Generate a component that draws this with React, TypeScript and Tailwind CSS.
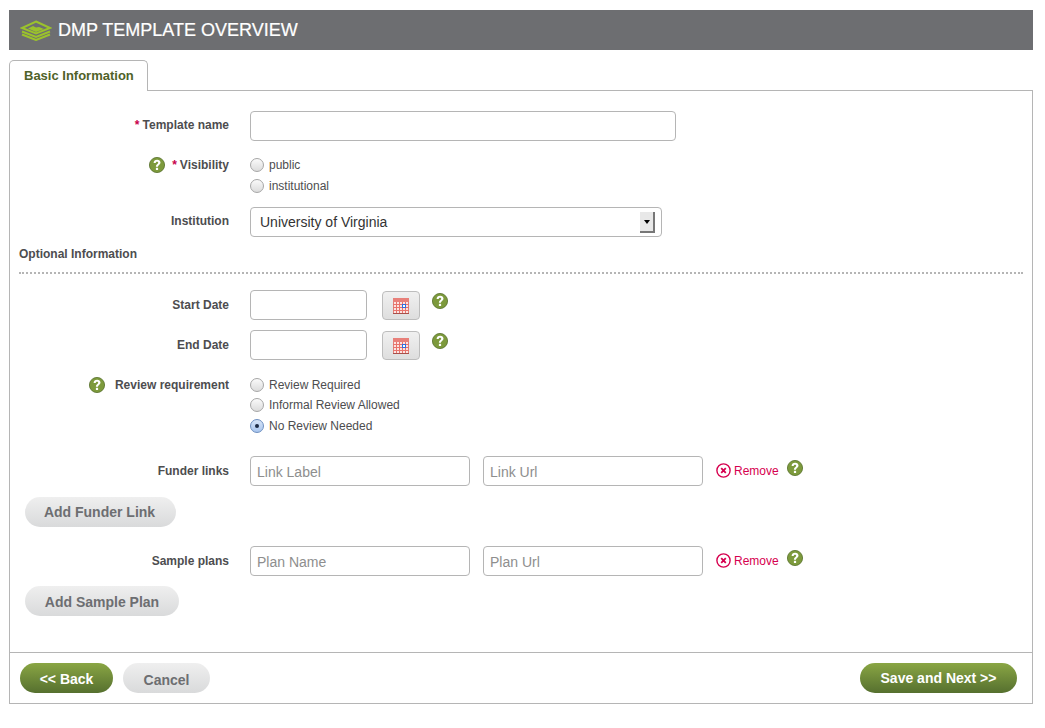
import React, { FC, ReactNode } from 'react';

const greenBtn =
  'h-[30px] rounded-[15px] bg-gradient-to-b from-[#8aa644] to-[#56702f] text-[14px] font-bold text-white flex items-center justify-center';
const greyBtn =
  'h-[30px] rounded-[15px] bg-gradient-to-b from-[#efefef] to-[#d9dadb] text-[14px] font-bold text-[#6d6e71] flex items-center justify-center';
const textInput =
  'h-[30px] rounded-[4px] border border-[#b5b5b5] bg-white px-[6px] text-[14px] text-[#333] placeholder:text-[#8e8e8e] outline-none';

const HelpIcon: FC<{ className?: string }> = ({ className }) => (
  <svg width="16" height="16" viewBox="0 0 16 16" className={`shrink-0 ${className ?? ''}`}>
    <circle cx="8" cy="8" r="7.6" fill="#7d9a3c" stroke="#55702a" strokeWidth="0.8" />
    <path
      d="M4.6 5.9C4.7 3.9 6.1 2.8 8.1 2.8c2 0 3.4 1.1 3.4 2.8 0 1.3-.8 2-1.6 2.6-.7.5-.9.8-.9 1.6H6.9c0-1.4.4-2 1.2-2.6.7-.5 1.1-.9 1.1-1.4 0-.6-.5-1-1.2-1-.8 0-1.2.4-1.3 1.1z"
      fill="#fff"
    />
    <rect x="6.9" y="10.8" width="2.2" height="2.2" fill="#fff" />
  </svg>
);

const LayersIcon = () => (
  <svg width="32" height="21" viewBox="0 0 32 21" fill="none" stroke="#9bc22c" strokeWidth="2">
    <path d="M16 1.5 30 8 16 13.5 2 8z" />
    <path d="M2 11.5 16 17 30 11.5" />
    <path d="M2 14.5 16 20 30 14.5" />
    <path d="M8 8.5l5-2.5 3 1.5 3-.5 5 2-8 3z" fill="#9bc22c" stroke="none" />
  </svg>
);

const CalendarIcon = () => (
  <svg width="16" height="16" viewBox="0 0 16 16">
    <rect x="0.5" y="0.5" width="15" height="15" fill="#fbe4e2" stroke="#e0807a" />
    <rect x="0" y="0" width="16" height="4" fill="#e8807a" />
    <path
      d="M0 6.5h16M0 9.5h16M0 12.5h16M3.5 4v12M6.5 4v12M9.5 4v12M12.5 4v12"
      stroke="#e8736c"
      strokeWidth="1"
    />
    <rect x="9.5" y="6.5" width="3" height="3" fill="#fff" stroke="#2f6fe0" />
    <rect x="0" y="15" width="16" height="1" fill="#a9504a" />
  </svg>
);

const RemoveIcon = () => (
  <svg width="15" height="15" viewBox="0 0 15 15" fill="none" stroke="#d6004f" className="shrink-0">
    <circle cx="7.5" cy="7.5" r="6.6" strokeWidth="1.4" />
    <path d="M5.2 5.2l4.6 4.6M9.8 5.2l-4.6 4.6" strokeWidth="1.8" />
  </svg>
);

const Radio: FC<{ label: string; checked?: boolean; className?: string }> = ({ label, checked, className }) => (
  <div className={`flex items-center gap-[5px] h-[14px] text-[12px] text-[#4d4d4f] ${className ?? ''}`}>
    <span
      className={`w-[14px] h-[14px] rounded-full border flex items-center justify-center shrink-0 ${
        checked
          ? 'border-[#6d8fc0] bg-gradient-to-b from-[#d6e4f7] to-[#a9c6ee]'
          : 'border-[#a6a6a6] bg-gradient-to-b from-[#fafafa] to-[#dcdcdc]'
      }`}
    >
      {checked && <span className="w-[4px] h-[4px] rounded-full bg-[#1c2a44]" />}
    </span>
    {label}
  </div>
);

const Field: FC<{ label: ReactNode; className?: string; tight?: boolean; children: ReactNode }> = ({
  label,
  className,
  tight,
  children,
}) => (
  <div className={`flex ${className ?? ''}`}>
    <div
      className={`w-[219px] mr-[21px] shrink-0 flex justify-end items-center gap-[7px] h-[14px] text-[12px] font-bold text-[#4d4d4f] ${
        tight ? 'mt-[7px]' : 'mt-[8px]'
      }`}
    >
      {label}
    </div>
    {children}
  </div>
);

const Req = () => <span className="text-[#c8004b] mr-[3px]">*</span>;

const DateField: FC<{ label: string; className?: string }> = ({ label, className }) => (
  <Field label={label} className={className}>
    <input className={`${textInput} w-[117px]`} />
    <div className="ml-[15px] mt-px w-[38px] h-[29px] rounded-[4px] border border-[#bdbdbd] bg-gradient-to-b from-[#f0f0f0] to-[#dedede] flex items-center justify-center">
      <CalendarIcon />
    </div>
    <HelpIcon className="ml-[12px] mt-[3px]" />
  </Field>
);

const LinkField: FC<{ label: string; first: string; second: string; className?: string }> = ({
  label,
  first,
  second,
  className,
}) => (
  <Field label={label} className={className}>
    <input className={`${textInput} w-[220px] pt-[2px]`} placeholder={first} />
    <input className={`${textInput} w-[220px] ml-[13px] pt-[2px]`} placeholder={second} />
    <div className="ml-[13px] mt-[7px] h-[15px] flex items-center gap-[3px] text-[12px] text-[#d6004f]">
      <RemoveIcon />
      Remove
    </div>
    <HelpIcon className="ml-[8px] mt-[4px]" />
  </Field>
);

const App: FC = () => {
  return (
    <div className="w-[1045px] h-[728px] bg-white pt-[10px] px-[9px] font-['Liberation_Sans',Arial,sans-serif] overflow-hidden">
      <header className="w-[1024px] h-[40px] bg-[#6d6e71] flex items-center pl-[11px] gap-[6px]">
        <LayersIcon />
        <h1 className="text-[18px] text-white [-webkit-text-stroke:0.2px_white]">DMP TEMPLATE OVERVIEW</h1>
      </header>

      <div className="mt-[10px] w-[139px] h-[31px] relative z-10 rounded-t-[5px] border border-b-0 border-[#b5b5b5] bg-white flex items-center pl-[14px] text-[13px] font-bold text-[#4f6228]">
        Basic Information
      </div>

      <section className="w-[1024px] h-[614px] -mt-px border border-[#b5b5b5] flex flex-col">
        <div className="flex-1 pt-[20px]">
          <Field
            tight
            label={
              <span>
                <Req />
                Template name
              </span>
            }
          >
            <input className={`${textInput} w-[426px]`} />
          </Field>

          <Field
            className="mt-[9px]"
            label={
              <>
                <HelpIcon />
                <span>
                  <Req />
                  Visibility
                </span>
              </>
            }
          >
            <div className="flex flex-col gap-[7px] pt-[8px]">
              <Radio label="public" />
              <Radio label="institutional" />
            </div>
          </Field>

          <Field className="mt-[14px]" tight label="Institution">
            <div className="w-[412px] h-[30px] rounded-[4px] border border-[#b5b5b5] flex items-center justify-between pl-[9px] pr-[6px] text-[14px] text-[#333]">
              University of Virginia
              <span className="w-[15px] h-[21px] mt-[1px] bg-[#e8e8e8] border-r-2 border-b-2 border-[#777] flex items-center justify-center">
                <span className="w-0 h-0 border-x-[3px] border-x-transparent border-t-[4px] border-t-black" />
              </span>
            </div>
          </Field>

          <div className="mx-[9px] mt-[10px] pb-[11px] border-b-2 border-dotted border-[#b5b5b5] text-[12px] leading-[14px] font-bold text-[#4d4d4f]">
            Optional Information
          </div>

          <DateField className="mt-[16px]" label="Start Date" />
          <DateField className="mt-[10px]" label="End Date" />

          <Field
            className="mt-[10px]"
            label={
              <>
                <HelpIcon className="mr-[3px]" />
                Review requirement
              </>
            }
          >
            <div className="flex flex-col pt-[8px]">
              <Radio label="Review Required" />
              <Radio label="Informal Review Allowed" className="mt-[6px]" />
              <Radio label="No Review Needed" checked className="mt-[7px]" />
            </div>
          </Field>

          <LinkField className="mt-[23px]" label="Funder links" first="Link Label" second="Link Url" />
          <div className={`${greyBtn} w-[151px] ml-[15px] mt-[11px] pr-[2px]`}>Add Funder Link</div>

          <LinkField className="mt-[19px]" label="Sample plans" first="Plan Name" second="Plan Url" />
          <div className={`${greyBtn} w-[154px] ml-[15px] mt-[10px] pt-[2px]`}>Add Sample Plan</div>
        </div>

        <footer className="h-[51px] border-t border-[#b5b5b5] flex items-center px-[10px] pr-[15px] gap-[10px]">
          <div className={`${greenBtn} w-[93px] pt-[2px]`}>&lt;&lt; Back</div>
          <div className={`${greyBtn} w-[87px] pt-[4px]`}>Cancel</div>
          <div className={`${greenBtn} w-[157px] ml-auto`}>Save and Next &gt;&gt;</div>
        </footer>
      </section>
    </div>
  );
};

export default App;
